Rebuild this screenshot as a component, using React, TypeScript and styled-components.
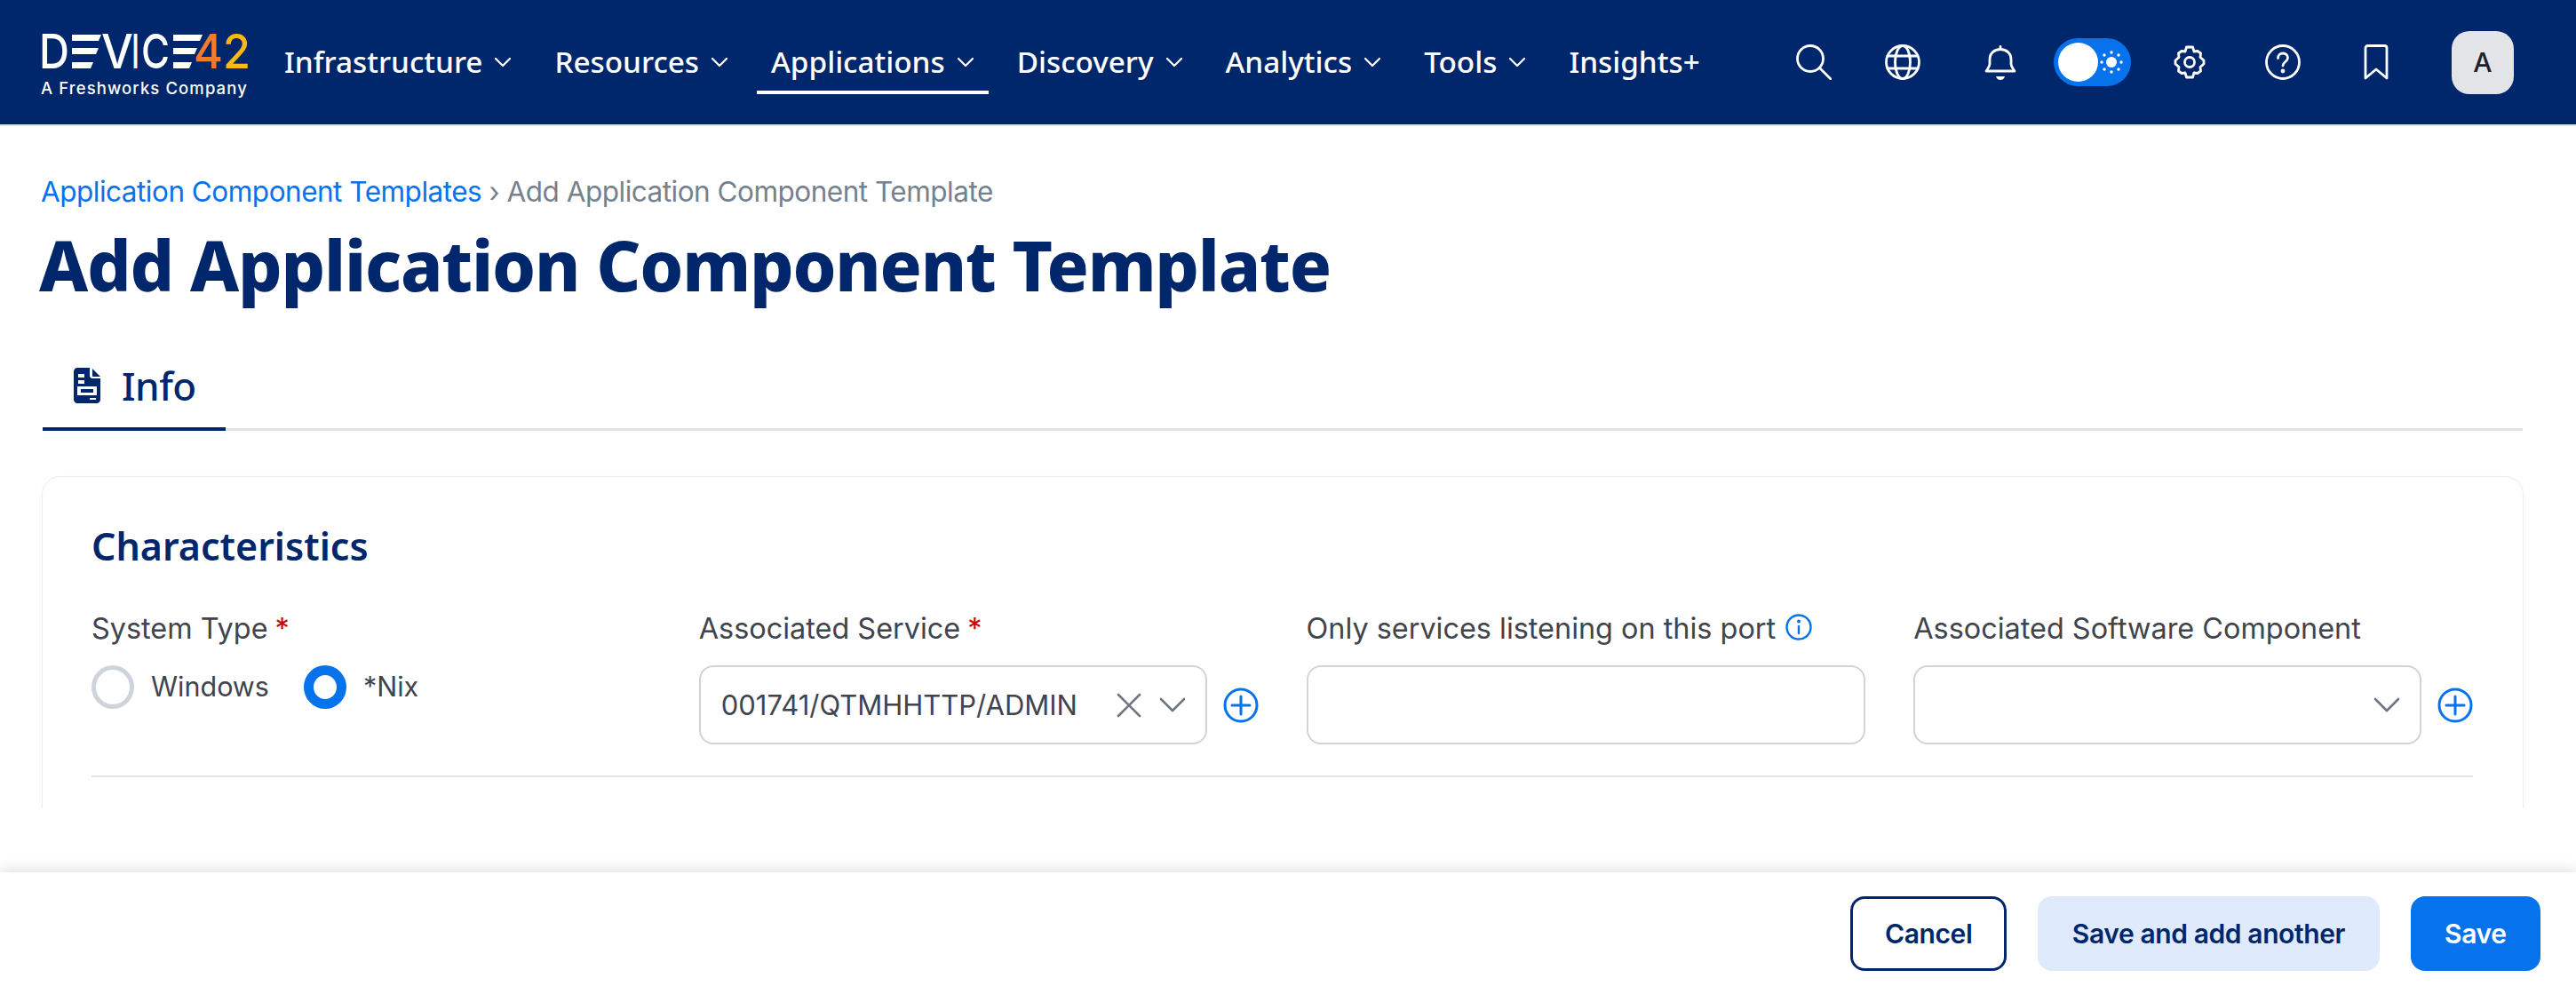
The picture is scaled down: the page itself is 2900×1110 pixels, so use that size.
import styled, { createGlobalStyle } from 'styled-components'

const navy = '#00266b'
const blue = '#0672eb'
const headFont = `'Noto Sans', 'Open Sans', sans-serif`
const bodyFont = `Inter, 'Noto Sans', sans-serif`

const GlobalStyle = createGlobalStyle`
  html, body { margin: 0; padding: 0; background: #fff; }
  * { box-sizing: border-box; }
`

const Page = styled.div`
  height: 1110px;
  display: flex;
  flex-direction: column;
  overflow: hidden;
`

const Header = styled.header`
  height: 142px;
  flex: none;
  display: flex;
  align-items: center;
  padding: 0 70px 0 46px;
  background: ${navy};
  border-bottom: 2px solid #dfe2e7;
`

const Logo = styled.div`
  width: 232px;
  flex: none;
  margin-top: 8px;
  display: flex;
  flex-direction: column;
`

const LogoSvg = styled.svg`
  margin: -13px 0 -13px -2px;
  display: block;
`

const LogoTag = styled.span`
  font: 500 18.5px/24px ${bodyFont};
  letter-spacing: 1.1px;
  color: #fff;
  white-space: nowrap;
  margin-top: 8px;
`

const Nav = styled.nav`
  display: flex;
  gap: 16px;
  margin-left: 26px;
  height: 140px;
`

const NavItem = styled.a<{ $active?: boolean }>`
  display: flex;
  align-items: center;
  gap: 13px;
  height: 106px;
  padding: 38px 16px 0;
  font: 500 33.3px/1 ${headFont};
  color: #fff;
  white-space: nowrap;
  border-bottom: 4px solid ${p => (p.$active ? '#fff' : 'transparent')};
`

const IconTray = styled.div`
  margin-left: auto;
  display: flex;
  align-items: center;
  gap: 65px;
  color: #fff;
`

const IconSlot = styled.span`
  width: 40px;
  height: 40px;
  display: flex;
  align-items: center;
  justify-content: center;
`

const GlobeSlot = styled(IconSlot)`
  margin: 0 5px 0 -5px;
`

const Toggle = styled.span`
  width: 87px;
  height: 54px;
  margin: 0 -19px 0 -25px;
  padding: 5px;
  border-radius: 27px;
  background: ${blue};
  display: flex;
  align-items: center;
  justify-content: space-between;
`

const ToggleThumb = styled.span`
  width: 45px;
  height: 44px;
  border-radius: 50%;
  background: #fff;
`

const Avatar = styled.span`
  width: 70px;
  height: 71px;
  border-radius: 20px;
  background: #e2e4e8;
  display: flex;
  align-items: center;
  justify-content: center;
  font: 500 30px/1 ${bodyFont};
  color: #1f2329;
`

const Content = styled.main`
  height: 768px;
  flex: none;
  overflow: hidden;
  padding: 54px 60px 0 48px;
`

const Breadcrumb = styled.div`
  margin-left: -2px;
  font: 400 31.5px/40px ${bodyFont};
  letter-spacing: -0.5px;
  color: #75818d;
`

const Crumb = styled.a`
  color: ${blue};
`

const Title = styled.h1`
  margin: 18px 0 0 -4px;
  font: 800 78px/88px ${headFont};
  letter-spacing: -1.2px;
  color: ${navy};
  white-space: nowrap;
`

const Tabs = styled.div`
  margin-top: 57px;
  height: 86px;
  display: flex;
  border-bottom: 3px solid #dfe2e7;
`

const Tab = styled.div`
  width: 206px;
  height: 86px;
  padding: 0 0 12px 35px;
  display: flex;
  align-items: center;
  gap: 24px;
  font: 500 44px/1 ${headFont};
  letter-spacing: -0.5px;
  color: ${navy};
  border-bottom: 4px solid ${navy};
`

const Card = styled.section`
  margin-top: 52px;
  height: 600px;
  padding: 50px 56px 0 55px;
  background: #fff;
  border-radius: 20px;
  box-shadow: 0 0 0 1px #eceef1, 0 2px 6px rgba(20, 30, 60, 0.06);
`

const CardTitle = styled.h2`
  margin: 0;
  font: 600 43px/56px ${headFont};
  color: ${navy};
`

const FieldGrid = styled.div`
  margin-top: 45px;
  display: grid;
  grid-template-columns: repeat(4, 1fr);
  column-gap: 54px;
  padding-bottom: 35px;
  border-bottom: 2px solid #e2e4e9;
`

const Field = styled.div`
  display: flex;
  flex-direction: column;
  min-width: 0;
`

const Label = styled.label`
  height: 61px;
  display: flex;
  align-items: flex-start;
  gap: 13px;
  font: 400 32.4px/40px ${bodyFont};
  color: #3f444d;
  white-space: nowrap;
`

const Required = styled.span`
  color: #c70000;
  margin-left: -5px;
`

const RadioRow = styled.div`
  display: flex;
  align-items: center;
  gap: 19px;
  height: 49px;
  font: 400 30.5px/1 ${bodyFont};
  color: #3f444d;
`

const Radio = styled.span<{ $on?: boolean }>`
  width: 48px;
  height: 49px;
  border-radius: 50%;
  background: #fff;
  border: ${p => (p.$on ? `11px solid ${blue}` : '5px solid #cfd4dc')};
  flex: none;
`

const RadioText = styled.span`
  margin-right: 20px;
`

const InputRow = styled.div`
  display: flex;
  align-items: center;
  gap: 18px;
`

const Box = styled.div`
  flex: 1;
  min-width: 0;
  height: 89px;
  padding: 0 22px 0 23px;
  display: flex;
  align-items: center;
  border: 2px solid #cfd4dc;
  border-radius: 16px;
  background: #fff;
  font: 400 31px/1 ${bodyFont};
  color: #3f444d;
  white-space: nowrap;
`

const BoxValue = styled.span`
  flex: 1;
`

const BoxIcons = styled.span`
  display: flex;
  align-items: center;
  gap: 19px;
  color: #6c7580;
  margin-left: auto;
`

const Footer = styled.footer`
  margin-top: auto;
  height: 128px;
  flex: none;
  padding: 27px 40px 0 0;
  display: flex;
  justify-content: flex-end;
  align-items: flex-start;
  gap: 35px;
  background: #fff;
  box-shadow: 0 -3px 14px rgba(60, 70, 110, 0.16);
`

const Button = styled.button<{ $kind: 'outline' | 'soft' | 'solid' }>`
  height: 84px;
  padding: 0 ${p => (p.$kind === 'outline' ? '36px' : '38.5px')};
  border-radius: 16px;
  font: 600 30px/1 ${bodyFont};
  letter-spacing: -0.4px;
  cursor: pointer;
  background: ${p => (p.$kind === 'solid' ? blue : p.$kind === 'soft' ? '#dfeafc' : '#fff')};
  color: ${p => (p.$kind === 'solid' ? '#fff' : navy)};
  border: ${p => (p.$kind === 'outline' ? `3px solid ${navy}` : 'none')};
`

const Stroke = ({ size = 40, children }: { size?: number; children: React.ReactNode }) => (
  <svg width={size} height={size} viewBox="0 0 40 40" fill="none" stroke="currentColor" strokeWidth="2.8" strokeLinecap="round" strokeLinejoin="round">
    {children}
  </svg>
)

const LogoMark = () => (
  <LogoSvg width="240" height="67" viewBox="0 -13 240 67" role="img" aria-label="DEVICE42">
    <g fill="#fff" fontFamily="Inter, sans-serif" fontWeight="500" fontSize="54">
      <text x="0" y="39" textLength="34" lengthAdjust="spacingAndGlyphs">D</text>
      <text x="70" y="39" textLength="36" lengthAdjust="spacingAndGlyphs">V</text>
      <text x="104" y="39" textLength="9" lengthAdjust="spacingAndGlyphs">I</text>
      <text x="115" y="39" textLength="32" lengthAdjust="spacingAndGlyphs">C</text>
      <path d="M37 1h33l-3 7H37zM37 16h30l-3 7H37zM37 32h24l-3 7H37z" />
      <path d="M151 1h33l-3 7h-30zM151 16h27l-3 7h-24zM151 32h21l-3 7h-18z" />
    </g>
    <g fontFamily="Inter, sans-serif" fontWeight="500" fontSize="54">
      <text x="174" y="39" fill="#ee7b2e" textLength="33" lengthAdjust="spacingAndGlyphs">4</text>
      <text x="207" y="39" fill="#fdb913" textLength="31" lengthAdjust="spacingAndGlyphs">2</text>
    </g>
  </LogoSvg>
)

const NavChevron = () => (
  <svg width="20" height="12" viewBox="0 0 20 12" fill="none" stroke="currentColor" strokeWidth="2.2" strokeLinecap="round" strokeLinejoin="round">
    <path d="M2 2l8 8 8-8" />
  </svg>
)

const SelectChevron = () => (
  <svg width="30" height="18" viewBox="0 0 30 18" fill="none" stroke="currentColor" strokeWidth="2.6" strokeLinecap="round" strokeLinejoin="round">
    <path d="M2 2l13 13L28 2" />
  </svg>
)

const ClearIcon = () => (
  <svg width="30" height="30" viewBox="0 0 30 30" fill="none" stroke="currentColor" strokeWidth="2.6" strokeLinecap="round">
    <path d="M3 3l24 24M27 3L3 27" />
  </svg>
)

const SearchIcon = () => (
  <Stroke>
    <circle cx="16" cy="16" r="14.5" />
    <path d="M27 27l12 12" />
  </Stroke>
)

const GlobeIcon = () => (
  <Stroke>
    <circle cx="20" cy="20" r="18.5" />
    <ellipse cx="20" cy="20" rx="8.5" ry="18.5" />
    <path d="M3 13h34M3 27h34" />
  </Stroke>
)

const BellIcon = () => (
  <Stroke>
    <path d="M20 2.5v3M8 22v-5c0-7 5-11.5 12-11.5S32 10 32 17v5c0 3 2 5 4 8H4c2-3 4-5 4-8z" />
    <path d="M15 36h10c-1 3-3 4-5 4s-4-1-5-4z" fill="currentColor" stroke="none" />
  </Stroke>
)

const SunIcon = () => (
  <svg width="26" height="26" viewBox="0 0 26 26" fill="#fff" style={{ marginRight: 4 }}>
    <circle cx="13" cy="13" r="6" />
    <circle cx="13" cy="2" r="1.7" />
    <circle cx="13" cy="24" r="1.7" />
    <circle cx="2" cy="13" r="1.7" />
    <circle cx="24" cy="13" r="1.7" />
    <circle cx="5" cy="5" r="1.7" />
    <circle cx="21" cy="5" r="1.7" />
    <circle cx="5" cy="21" r="1.7" />
    <circle cx="21" cy="21" r="1.7" />
  </svg>
)

const GearIcon = () => (
  <Stroke>
    <path d="M16.5 3h7l1.5 5 4-.5 3.500 2.500-.5 4.500 4 3.500v4l-4 3.500.5 4.500-3.500 2.500-4-.5-1.500 5h-7l-1.500-5-4 .5L7.500 30l.5-4.500L4 22v-4l4-3.500L7.500 10 11 7.500l4 .5z" />
    <circle cx="20" cy="20" r="5.5" />
  </Stroke>
)

const HelpIcon = () => (
  <Stroke>
    <circle cx="20" cy="20" r="18.5" />
    <path d="M14.500 15.500c0-3.500 2.500-5.500 5.500-5.500s5.500 2 5.500 5c0 4.500-5.500 4.500-5.500 9" />
    <circle cx="20" cy="30" r="1" fill="currentColor" />
  </Stroke>
)

const BookmarkIcon = () => (
  <Stroke>
    <path d="M8 38V4c0-1.500 1-2.500 2.500-2.500h19C31 1.500 32 2.500 32 4v34L20 28z" />
  </Stroke>
)

const DocIcon = () => (
  <svg width="30" height="40" viewBox="0 0 30 40" fill={navy}>
    <path fillRule="evenodd" d="M4 0h14v9c0 1.500 1 3 3 3h9v24c0 2-2 4-4 4H4c-2 0-4-2-4-4V4c0-2 2-4 4-4zM5 7v4h7V7zm0 7v4h7v-4zm-1 7v10h22V21zm4 3h14v4H8zm10 10v2h7v-2z" />
    <path d="M21 1l9 9h-8c-.5 0-1-.5-1-1z" />
  </svg>
)

const PlusIcon = () => (
  <svg width="40" height="40" viewBox="0 0 40 40" fill="none" stroke={blue} strokeWidth="3" strokeLinecap="round" style={{ flex: 'none' }}>
    <circle cx="20" cy="20" r="18" />
    <path d="M20 10v20M10 20h20" />
  </svg>
)

const InfoIcon = () => (
  <svg width="30" height="30" viewBox="0 0 30 30" fill="none" stroke={blue} strokeWidth="2.400" strokeLinecap="round" style={{ marginLeft: -2, marginTop: 3 }}>
    <circle cx="15" cy="15" r="13.500" />
    <path d="M15 14v8" />
    <circle cx="15" cy="8.500" r="0.8" fill={blue} />
  </svg>
)

const navItems = ['Infrastructure', 'Resources', 'Applications', 'Discovery', 'Analytics', 'Tools']

const App = () => (
  <Page>
    <GlobalStyle />
    <Header>
      <Logo>
        <LogoMark />
        <LogoTag>A Freshworks Company</LogoTag>
      </Logo>
      <Nav>
        {navItems.map(item => (
          <NavItem key={item} $active={item === 'Applications'}>
            {item}
            <NavChevron />
          </NavItem>
        ))}
        <NavItem>Insights+</NavItem>
      </Nav>
      <IconTray>
        <IconSlot><SearchIcon /></IconSlot>
        <GlobeSlot><GlobeIcon /></GlobeSlot>
        <IconSlot><BellIcon /></IconSlot>
        <Toggle>
          <ToggleThumb />
          <SunIcon />
        </Toggle>
        <IconSlot><GearIcon /></IconSlot>
        <IconSlot><HelpIcon /></IconSlot>
        <IconSlot><BookmarkIcon /></IconSlot>
        <Avatar>A</Avatar>
      </IconTray>
    </Header>
    <Content>
      <Breadcrumb>
        <Crumb>Application Component Templates</Crumb> › Add Application Component Template
      </Breadcrumb>
      <Title>Add Application Component Template</Title>
      <Tabs>
        <Tab>
          <DocIcon />
          Info
        </Tab>
      </Tabs>
      <Card>
        <CardTitle>Characteristics</CardTitle>
        <FieldGrid>
          <Field>
            <Label>System Type <Required>*</Required></Label>
            <RadioRow>
              <Radio />
              <RadioText>Windows</RadioText>
              <Radio $on />
              <RadioText>*Nix</RadioText>
            </RadioRow>
          </Field>
          <Field>
            <Label>Associated Service <Required>*</Required></Label>
            <InputRow>
              <Box>
                <BoxValue>001741/QTMHHTTP/ADMIN</BoxValue>
                <BoxIcons>
                  <ClearIcon />
                  <SelectChevron />
                </BoxIcons>
              </Box>
              <PlusIcon />
            </InputRow>
          </Field>
          <Field>
            <Label>Only services listening on this port <InfoIcon /></Label>
            <InputRow>
              <Box />
            </InputRow>
          </Field>
          <Field>
            <Label>Associated Software Component</Label>
            <InputRow>
              <Box>
                <BoxIcons>
                  <SelectChevron />
                </BoxIcons>
              </Box>
              <PlusIcon />
            </InputRow>
          </Field>
        </FieldGrid>
      </Card>
    </Content>
    <Footer>
      <Button $kind="outline">Cancel</Button>
      <Button $kind="soft">Save and add another</Button>
      <Button $kind="solid">Save</Button>
    </Footer>
  </Page>
)

export default App
